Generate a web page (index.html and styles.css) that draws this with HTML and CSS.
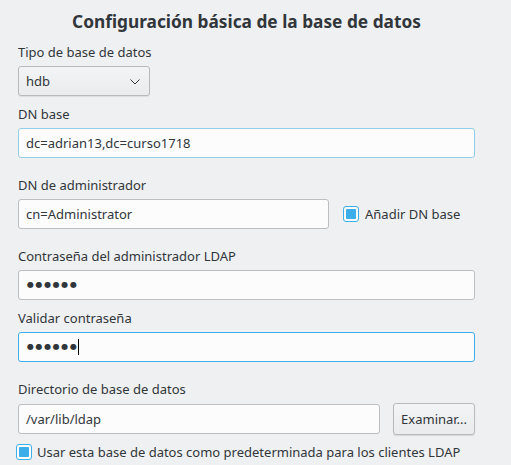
FILE: index.html
```html
<!DOCTYPE html>
<html lang="es">
<head>
<meta charset="utf-8">
<title>Configuración básica de la base de datos</title>
<link rel="stylesheet" href="styles.css">
</head>
<body>
<div class="page">
  <h1 class="title">Configuración básica de la base de datos</h1>

  <div class="group">
    <div class="label">Tipo de base de datos</div>
    <div class="combo">
      <span>hdb</span>
      <svg class="chev" width="10" height="6" viewBox="0 0 10 6"><path d="M0.5 0.5 L5 5 L9.5 0.5" fill="none" stroke="#31363b" stroke-width="1"/></svg>
    </div>
  </div>

  <div class="group gap-s">
    <div class="label">DN base</div>
    <div class="input hover">dc=adrian13,dc=curso1718</div>
  </div>

  <div class="group gap-l">
    <div class="label">DN de administrador</div>
    <div class="row">
      <div class="input admin">cn=Administrator</div>
      <label class="check">
        <span class="box"><span class="fill"></span></span>
        <span>Añadir DN base</span>
      </label>
    </div>
  </div>

  <div class="group gap-l">
    <div class="label">Contraseña del administrador LDAP</div>
    <div class="input"><span class="dots">●●●●●●</span></div>
  </div>

  <div class="group gap-s">
    <div class="label">Validar contraseña</div>
    <div class="input focus"><span class="dots">●●●●●●</span><span class="caret"></span></div>
  </div>

  <div class="group gap-l">
    <div class="label">Directorio de base de datos</div>
    <div class="row">
      <div class="input dir">/var/lib/ldap</div>
      <div class="button">Examinar...</div>
    </div>
  </div>

  <label class="check bottom">
    <span class="box"><span class="fill"></span></span>
    <span>Usar esta base de datos como predeterminada para los clientes LDAP</span>
  </label>
</div>
</body>
</html>
```

FILE: styles.css
```css
html, body {
  margin: 0;
  padding: 0;
  background: #eff0f1;
}
body {
  font-family: "Noto Sans", "DejaVu Sans", sans-serif;
  font-size: 13px;
  color: #31363b;
  width: 511px;
  height: 465px;
  overflow: hidden;
}
.page {
  padding: 0 36px 0 18px;
  display: flex;
  flex-direction: column;
}
.title {
  margin: 9px 0 0 0;
  font-size: 17.3px;
  font-weight: bold;
  line-height: 26px;
  text-align: center;
  color: #31363b;
}
.group {
  display: flex;
  flex-direction: column;
  gap: 5px;
  margin-top: 8px;
}
.group.gap-s { margin-top: 9px; }
.group.gap-l { margin-top: 18px; }
.label {
  line-height: 18px;
  height: 18px;
}
.combo {
  height: 28px;
  border: 1px solid #b8babc;
  border-radius: 3px;
  background: linear-gradient(#f3f4f5, #eaebec);
  box-shadow: 0 1px 1px rgba(0,0,0,0.08);
  display: flex;
  align-items: center;
  justify-content: space-between;
  padding: 0 9px 0 7px;
  box-sizing: content-box;
  width: 114px;
}
.chev { margin-top: 1px; }
.input {
  height: 28px;
  line-height: 28px;
  border: 1px solid #bcbebf;
  border-radius: 3px;
  background: #fcfcfc;
  padding: 0 7px;
  display: flex;
  align-items: center;
  box-sizing: content-box;
}
.input.hover { border-color: #93cee9; }
.input.focus { border-color: #3daee9; }
.row {
  display: flex;
  align-items: center;
}
.input.admin { width: 295px; }
.input.dir { width: 347px; }
.check {
  display: flex;
  align-items: center;
  gap: 6px;
}
.row .check { margin-left: 14px; }
.box {
  width: 14px;
  height: 14px;
  border: 1px solid #3daee9;
  border-radius: 3px;
  background: #fcfcfc;
  display: flex;
  align-items: center;
  justify-content: center;
}
.fill {
  width: 10px;
  height: 10px;
  background: #3daee9;
  border-radius: 1px;
}
.dots {
  font-size: 8px;
  letter-spacing: 1.6px;
  font-family: "DejaVu Sans", sans-serif;
  margin-left: 1px;
}
.caret {
  width: 1px;
  height: 16px;
  background: #000;
}
.button {
  margin-left: 13px;
  width: 80px;
  height: 30px;
  border: 1px solid #b8babc;
  border-radius: 3px;
  background: linear-gradient(#f3f4f5, #eaebec);
  box-shadow: 0 1px 1px rgba(0,0,0,0.1);
  display: flex;
  align-items: center;
  justify-content: center;
}
.check.bottom {
  margin-top: 8px;
  margin-left: -2px;
  gap: 5px;
}
```
